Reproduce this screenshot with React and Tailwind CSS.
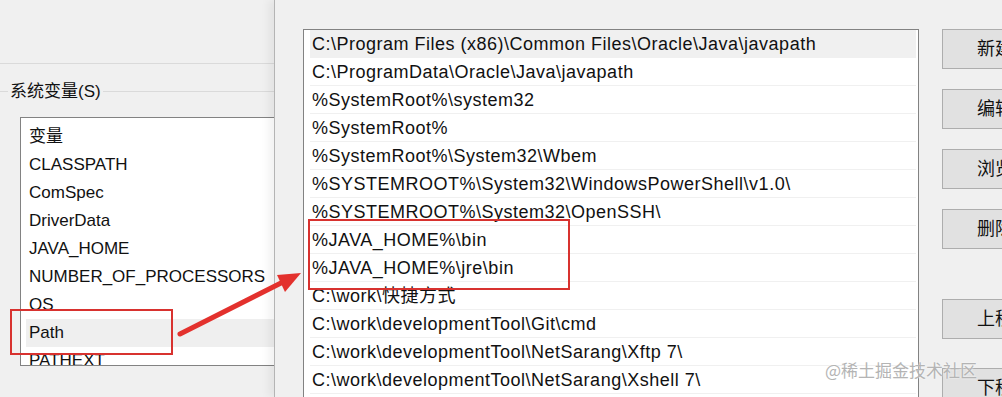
import React from 'react'

const sysVars = ['CLASSPATH', 'ComSpec', 'DriverData', 'JAVA_HOME', 'NUMBER_OF_PROCESSORS', 'OS', 'Path', 'PATHEXT']

const paths = [
  'C:\\Program Files (x86)\\Common Files\\Oracle\\Java\\javapath',
  'C:\\ProgramData\\Oracle\\Java\\javapath',
  '%SystemRoot%\\system32',
  '%SystemRoot%',
  '%SystemRoot%\\System32\\Wbem',
  '%SYSTEMROOT%\\System32\\WindowsPowerShell\\v1.0\\',
  '%SYSTEMROOT%\\System32\\OpenSSH\\',
  '%JAVA_HOME%\\bin',
  '%JAVA_HOME%\\jre\\bin',
  'C:\\work\\快捷方式',
  'C:\\work\\developmentTool\\Git\\cmd',
  'C:\\work\\developmentTool\\NetSarang\\Xftp 7\\',
  'C:\\work\\developmentTool\\NetSarang\\Xshell 7\\',
  'C:\\work\\developmentTool\\NetSarang\\Xshell 7\\',
]

const buttons = [
  { label: '新建', gap: 'mt-0' },
  { label: '编辑', gap: 'mt-[20px]' },
  { label: '浏览', gap: 'mt-[20px]' },
  { label: '删除', gap: 'mt-[20px]' },
  { label: '上移', gap: 'mt-[50px]' },
  { label: '下移', gap: 'mt-[29px]' },
]

const font = "font-['Liberation_Sans','Noto_Sans_CJK_SC',sans-serif]"

export default function App() {
  return (
    <div className={`relative w-[1002px] h-[397px] overflow-hidden flex bg-[#f0f0f0] text-[#111] ${font}`}>
      {/* left: environment variables window */}
      <div className="w-[274px] shrink-0 overflow-hidden bg-[#f0f0f0]">
        <div className="h-[64px] border-b border-[#dadada]" />
        <div className="pt-[18px]">
          <div className="h-[18px] flex items-center">
            <div className="w-[8px] h-px bg-[#dadada]" />
            <span className="px-[2px] text-[17px] leading-none">系统变量(S)</span>
            <div className="flex-1 h-px bg-[#dadada]" />
          </div>
          <div className="ml-[20px] mt-[17px] w-[290px] h-[249px] overflow-hidden border border-[#828282] bg-white pt-[5px] text-[17px]">
            <div className="h-[28px] flex items-center pl-[8px]">变量</div>
            {sysVars.map((v) => (
              <div
                key={v}
                className={`h-[28px] flex items-center ml-[5px] pl-[3px] ${v === 'Path' ? 'bg-[#efefef]' : ''}`}
              >
                {v}
              </div>
            ))}
          </div>
        </div>
      </div>

      {/* right: edit environment variable dialog */}
      <div className="flex-1 flex items-start border-l border-[#b4b4b4] shadow-[-6px_0_8px_rgba(0,0,0,0.05)] pl-[28px] pt-[29px]">
        <div className="w-[616px] h-[400px] shrink-0 border border-[#828282] bg-white pl-[6px] pr-[2px] text-[18px] tracking-[0.5px]">
          {paths.map((p, i) => (
            <div
              key={i}
              className={`h-[28px] flex items-center pl-[2px] pt-[1px] border-b border-[#f0f0f0] whitespace-nowrap ${i === 0 ? 'bg-[#f0f0f0]' : ''}`}
            >
              {p}
            </div>
          ))}
        </div>
        <div className="ml-[23px] flex flex-col">
          {buttons.map((b) => (
            <div
              key={b.label}
              className={`${b.gap} w-[106px] h-[40px] shrink-0 flex items-center justify-center border border-[#adadad] bg-[#e1e1e1] text-[18px]`}
            >
              {b.label}
            </div>
          ))}
        </div>
      </div>

      {/* annotations */}
      <div className="absolute left-[10px] top-[309px] w-[163px] h-[46px] border-2 border-[#d8322f]" />
      <div className="absolute left-[308px] top-[219px] w-[262px] h-[71px] border-2 border-[#d8322f]" />
      <svg className="absolute left-0 top-0" width="1002" height="397">
        <line x1="180" y1="334" x2="283" y2="282" stroke="#e3312d" strokeWidth="5" strokeLinecap="round" />
        <polygon points="301,273 285,292 277,275" fill="#e3312d" />
      </svg>
      <div className="absolute left-[825px] top-[361px] text-[17px] leading-none text-[#b4b4b4] [text-shadow:0_0_2px_#fff] font-['Noto_Sans_CJK_SC',sans-serif]">
        @稀土掘金技术社区
      </div>
    </div>
  )
}
